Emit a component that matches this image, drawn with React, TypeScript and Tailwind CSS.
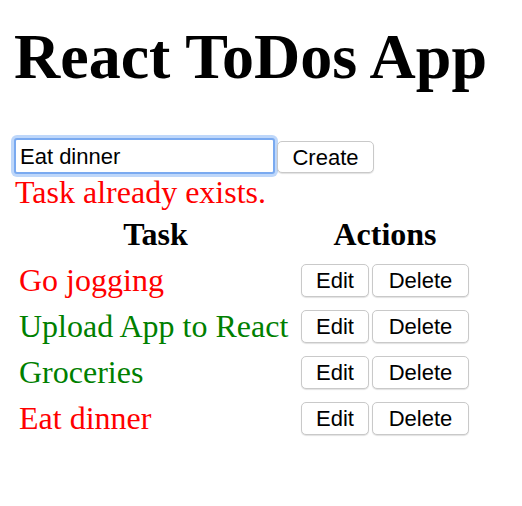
import { useState } from "react"

const tasks = [
  { name: "Go jogging", done: false },
  { name: "Upload App to React", done: true },
  { name: "Groceries", done: true },
  { name: "Eat dinner", done: false },
]

function Btn({ label, w }: { label: string; w: string }) {
  return (
    <button
      className={`${w} h-[33px] pt-[2px] bg-white border border-[#c9c9c9] rounded-[5px] shadow-[0_1px_1px_rgba(0,0,0,0.12)] text-[22px] leading-none text-black font-['Liberation_Sans',Arial,sans-serif]`}
    >
      {label}
    </button>
  )
}

export default function App() {
  const [value, setValue] = useState("Eat dinner")

  return (
    <div className="h-[506px] overflow-hidden bg-white pl-[14px] pt-[25px] font-['Liberation_Serif','Times_New_Roman',serif] text-black">
      <h1 className="mb-[49px] text-[64px] leading-[64px] font-bold">React ToDos App</h1>

      <div className="flex items-start h-[36px]">
        <input
          value={value}
          onChange={(e) => setValue(e.target.value)}
          className="w-[261px] h-[36px] border-2 border-[#7aaaf0] rounded-[3px] px-[4px] pt-[2px] bg-white text-[22px] text-black outline-none shadow-[0_0_0_3px_rgba(125,175,245,0.5)] font-['Liberation_Sans',Arial,sans-serif]"
        />
        <button className="ml-[2px] mt-[3px] w-[97px] h-[32px] pt-[2px] bg-white border border-[#c9c9c9] rounded-[5px] shadow-[0_1px_1px_rgba(0,0,0,0.12)] text-[22px] leading-none text-black font-['Liberation_Sans',Arial,sans-serif]">
          Create
        </button>
      </div>
      <div className="text-[32px] leading-[37px] text-[#ff0000] pl-px">Task already exists.</div>

      <div className="grid grid-cols-[283px_176px] text-[32px] leading-[37px]">
        <div className="h-[46px] flex items-center justify-center font-bold">Task</div>
        <div className="h-[46px] flex items-center justify-center font-bold">Actions</div>
        {tasks.map((t) => (
          <div key={t.name} className="contents">
            <div className={`h-[46px] flex items-center pl-[5px] ${t.done ? "text-[#008000]" : "text-[#ff0000]"}`}>
              {t.name}
            </div>
            <div className="h-[46px] flex items-center justify-center gap-[3px]">
              <Btn label="Edit" w="w-[68px]" />
              <Btn label="Delete" w="w-[97px]" />
            </div>
          </div>
        ))}
      </div>
    </div>
  )
}
